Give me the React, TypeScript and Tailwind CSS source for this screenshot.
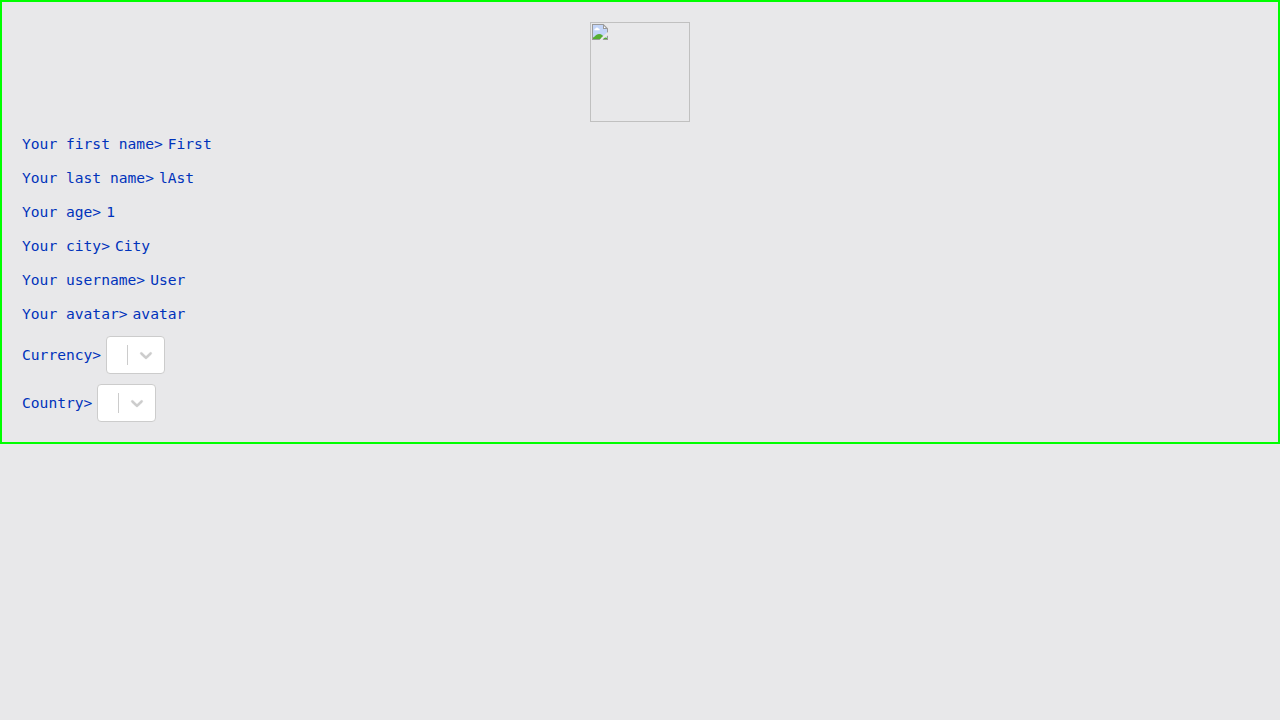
const fields = [
  { label: 'Your first name>', value: 'First' },
  { label: 'Your last name>', value: 'lAst' },
  { label: 'Your age>', value: '1' },
  { label: 'Your city>', value: 'City' },
  { label: 'Your username>', value: 'User' },
  { label: 'Your avatar>', value: 'avatar' },
];

function MissingImage() {
  return (
    <div className="size-[100px] self-center border border-[#c0c0c0] p-px">
      <svg width="16" height="16" viewBox="0 0 16 16">
        <path d="M1 1h10l4 4v10H1z" fill="#c3d5f8" />
        <path d="M11 1l4 4h-4z" fill="#fff" />
        <path d="M2.5 6.2a1.2 1.2 0 0 1 1-1.7a1.7 1.7 0 0 1 3 0a1.1 1.1 0 0 1 1 1.7z" fill="#fff" />
        <path d="M1 15v-1.5C3 13 4 10 7 10s4 2 5 3l3 1v1z" fill="#54ae32" />
        <path d="M0 0h11.5v1H1v14h14v1H0zM15 5h1v11h-1zM11 0.5h1V4h3.5v1H11z" fill="#9a9a9a" />
        <path d="M11.5 0L16 4.5V5.5h-.6L11 1z" fill="#9a9a9a" />
        <path d="M7.5 16.1L9.5 13.5L14 9.5L16.1 8V11.5L11.5 14.5L10.5 16.1z" fill="#e8e8ea" />
      </svg>
    </div>
  );
}

function Select({ label }: { label: string }) {
  return (
    <button
      type="button"
      aria-label={label}
      className="flex h-[38px] w-[59px] rounded border border-[#cccccc] bg-white pl-5"
    >
      <span className="my-2 w-px self-stretch bg-[#cccccc]" />
      <span className="flex self-stretch p-2 text-[#cccccc]">
        <svg width="20" height="20" viewBox="0 0 20 20" fill="currentColor" stroke="currentColor" strokeWidth="0.3">
          <path d="M4.516 7.548c0.436-0.446 1.043-0.481 1.576 0l3.908 3.747 3.908-3.747c0.533-0.481 1.141-0.446 1.574 0 0.436 0.445 0.408 1.197 0 1.615-0.406 0.418-4.695 4.502-4.695 4.502-0.217 0.223-0.502 0.335-0.787 0.335s-0.57-0.112-0.789-0.335c0 0-4.287-4.084-4.695-4.502s-0.436-1.17 0-1.615z" />
        </svg>
      </span>
    </button>
  );
}

export default function App() {
  return (
    <div className="min-h-screen bg-[#e8e8ea] font-['DejaVu_Sans_Mono',monospace] text-[14.61px] leading-6 text-[#0033bb]">
      <main className="flex flex-col gap-2.5 border-2 border-[#00ff00] p-5">
        <MissingImage />
        {fields.map((field) => (
          <div key={field.label} className="flex h-6 items-center gap-[5px]">
            <span>{field.label}</span>
            <span>{field.value}</span>
          </div>
        ))}
        <div className="flex items-center gap-[5px]">
          <span>Currency&gt;</span>
          <Select label="Currency" />
        </div>
        <div className="flex items-center gap-[5px]">
          <span>Country&gt;</span>
          <Select label="Country" />
        </div>
      </main>
    </div>
  );
}
